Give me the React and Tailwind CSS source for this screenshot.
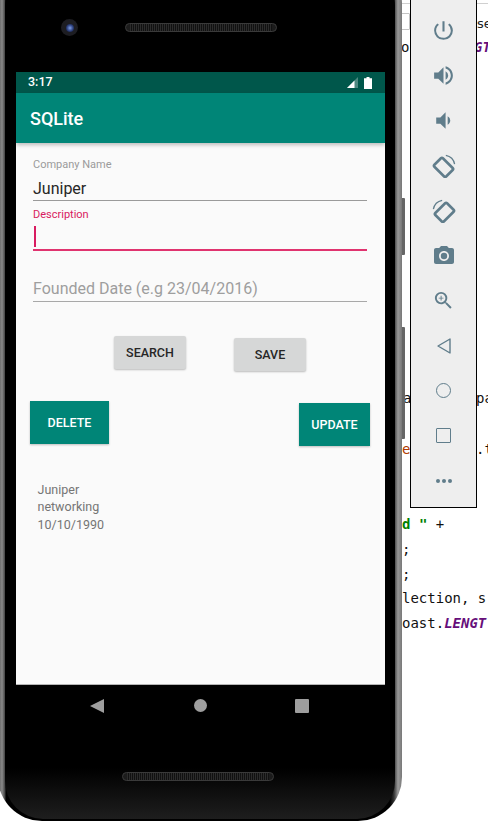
import React from "react";
import { MdPowerSettingsNew, MdVolumeUp, MdVolumeDown, MdCameraAlt, MdOutlineZoomIn } from "react-icons/md";

const roboto = "font-['Roboto',sans-serif]";
const slate = "#607d8b";

function RotateIcon({ flip }) {
  return (
    <svg width="24" height="24" viewBox="0 0 26 26" fill="none" stroke={slate} style={flip ? { transform: "scaleX(-1)" } : undefined}>
      <rect x="6" y="5.5" width="13" height="18" rx="1.5" strokeWidth="2.8" transform="rotate(-45 12.5 14.5)" />
      <path d="M15 1.5 A12 12 0 0 1 24.5 11" strokeWidth="1.4" />
    </svg>
  );
}

function SideButton({ children }) {
  return <div className="h-[45px] flex items-center justify-center">{children}</div>;
}

function Speaker({ className }) {
  return (
    <div className={`h-[9px] w-[152px] rounded-full border border-[#3a3a3a] bg-[#1c1c1c] ${className}`}>
      <div className="h-full mx-1 bg-[repeating-linear-gradient(90deg,#2c2c2c_0,#2c2c2c_1px,#111_1px,#111_2px)]" />
    </div>
  );
}

export default function App() {
  return (
    <div className={`relative w-[488px] h-[821px] overflow-hidden bg-white ${roboto}`}>
      {/* Editor behind the emulator */}
      <div className="absolute left-[396px] top-[3px] w-[92px] h-px bg-[#d0d0d0]" />
      <div className="absolute left-[400px] top-[13px] w-[10px] h-[17px] border border-[#c4c4c4] bg-white rounded-[1px]" />
      <div className="absolute left-[477px] top-[15px] text-[13px] leading-[18px] text-[#222] font-['DejaVu_Sans',sans-serif]">se</div>
      <div className="absolute left-0 top-0 w-full font-['DejaVu_Sans_Mono',monospace] text-[14px] leading-[24px] text-[#111]">
        <div className="absolute left-[401px] top-[35px] whitespace-pre">oa</div>
        <div className="absolute left-[474px] top-[35px] whitespace-pre font-bold italic text-[#660e7a]">GT</div>
        <div className="absolute left-[403px] top-[386px] whitespace-pre">al</div>
        <div className="absolute left-[476px] top-[386px] whitespace-pre">pa</div>
        <div className="absolute left-[402px] top-[437px] whitespace-pre text-[#b03a00]">e</div>
        <div className="absolute left-[476px] top-[437px] whitespace-pre">.t</div>
        <div className="absolute left-[402px] top-[512px] whitespace-pre"><span className="font-bold text-[#008000]">d</span> <span className="font-bold text-[#008000]">"</span> +</div>
        <div className="absolute left-[402px] top-[537px]">;</div>
        <div className="absolute left-[402px] top-[562px]">;</div>
        <div className="absolute left-[402px] top-[586px] whitespace-pre">lection, s</div>
        <div className="absolute left-[402px] top-[611px] whitespace-pre">oast.<span className="font-bold italic text-[#660e7a]">LENGT</span></div>
      </div>

      {/* Emulator side toolbar */}
      <div className="absolute left-[410px] top-[-2px] w-[67px] h-[510px] bg-[#eeeeee] border border-black pt-[9px] flex flex-col">
        <SideButton><MdPowerSettingsNew size={25} color={slate} /></SideButton>
        <SideButton><MdVolumeUp size={25} color={slate} /></SideButton>
        <SideButton><MdVolumeDown size={25} color={slate} /></SideButton>
        <SideButton><RotateIcon /></SideButton>
        <SideButton><RotateIcon flip /></SideButton>
        <SideButton><MdCameraAlt size={24} color={slate} /></SideButton>
        <SideButton><MdOutlineZoomIn size={23} color={slate} /></SideButton>
        <SideButton>
          <svg width="16" height="18" viewBox="0 0 16 18" fill="none" stroke={slate} strokeWidth="1.4"><path d="M14 2 L2 9 L14 16 Z" strokeLinejoin="round" /></svg>
        </SideButton>
        <SideButton><div className="w-[15px] h-[15px] rounded-full border-[1.5px] border-[#607d8b]" /></SideButton>
        <SideButton><div className="w-[15px] h-[15px] rounded-[1px] border-[1.5px] border-[#607d8b]" /></SideButton>
        <SideButton>
          <div className="flex gap-[2px]">
            <span className="w-[4px] h-[4px] rounded-full bg-[#607d8b]" />
            <span className="w-[4px] h-[4px] rounded-full bg-[#607d8b]" />
            <span className="w-[4px] h-[4px] rounded-full bg-[#607d8b]" />
          </div>
        </SideButton>
      </div>

      {/* Side keys on the phone edge */}
      <div className="absolute left-[401px] top-[198px] w-[4px] h-[57px] bg-[#666666] rounded-r-[1px]" />
      <div className="absolute left-[401px] top-[327px] w-[4px] h-[112px] bg-[#666666] rounded-r-[1px]" />

      {/* Phone body */}
      <div className="absolute left-[-2px] top-[-40px] w-[404px] h-[861px] rounded-[44px] bg-[linear-gradient(90deg,#555_0,#8a8a8a_1%,#444_1.7%,#000_2%,#000_97%,#333_98%,#9a9a9a_99%,#777_100%)] p-[7px_7px_2px_7px]">
        <div className="w-full h-full rounded-[38px] bg-[linear-gradient(180deg,#000_0,#000_94%,#1e1e1e_100%)] flex flex-col">
          <div className="h-[105px] relative flex items-end pb-[36px] shrink-0">
            <div className="ml-[56px] w-[17px] h-[17px] rounded-full bg-[#1d1d22] flex items-center justify-center">
              <div className="w-[8px] h-[8px] rounded-full bg-[radial-gradient(circle,#7f9fe8_0,#2c3f7c_55%,#0a0f22_100%)]" />
            </div>
            <Speaker className="ml-[47px] mb-[4px]" />
          </div>

          {/* Screen */}
          <div className="ml-[11px] w-[369px] h-[613px] shrink-0 flex flex-col bg-[#fafafa] border-b border-[#b5b5b5]">
            <div className="h-[21px] bg-[#00574b] flex items-center pl-[12px] pr-[13px] text-white text-[12.5px] font-medium">
              <span>3:17</span>
              <div className="ml-auto flex items-center gap-[6px]">
                <svg width="11" height="11" viewBox="0 0 11 11"><path d="M11 0V11H0Z" fill="#ffffff" fillOpacity="0.3" /><path d="M7.5 3.5V11H0Z" fill="#ffffff" /></svg>
                <svg width="8" height="12" viewBox="0 0 8 12"><path d="M2.5 0H5.5V1.2H8V12H0V1.2H2.5Z" fill="#ffffff" /></svg>
              </div>
            </div>
            <div className="h-[50px] bg-[#008577] flex items-center pl-[14px] text-white text-[18px] font-medium shadow-[0_2px_4px_rgba(0,0,0,0.25)]">SQLite</div>

            <div className="pl-[17px] pr-[18px] pt-[15px]">
              <div className="text-[11px] leading-[14px] text-[#9b9b9b]">Company Name</div>
              <div className="text-[16px] leading-[22px] mt-[6px] text-[#262626] border-b border-[#9a9a9a] h-[23px]">Juniper</div>
              <div className="text-[11px] leading-[14px] text-[#d81b60] mt-[7px]">Description</div>
              <div className="h-[30px] border-b-2 border-[#e0336f] flex pt-[5px] mt-[-1px]">
                <div className="w-[2px] h-[21px] bg-[#d81b60] ml-px" />
              </div>
              <div className="text-[16px] leading-[22px] mt-[27px] text-[#9e9e9e] border-b border-[#a8a8a8] h-[24px]">Founded Date (e.g 23/04/2016)</div>
            </div>

            <div className="flex pl-[98px] gap-[48px] mt-[34px] text-[12.5px] font-medium text-[#262626]">
              <div className="w-[72px] h-[33px] pt-[2px] bg-[#d6d7d7] rounded-[2px] shadow-[0_1px_2px_rgba(0,0,0,0.25)] flex items-center justify-center">SEARCH</div>
              <div className="w-[72px] h-[33px] pt-[2px] mt-[2px] bg-[#d6d7d7] rounded-[2px] shadow-[0_1px_2px_rgba(0,0,0,0.25)] flex items-center justify-center">SAVE</div>
            </div>

            <div className="flex justify-between pl-[14px] pr-[15px] mt-[30px] text-[12.5px] font-medium text-white">
              <div className="w-[79px] h-[43px] pt-[2px] bg-[#008577] shadow-[0_1px_2px_rgba(0,0,0,0.25)] flex items-center justify-center">DELETE</div>
              <div className="w-[71px] h-[43px] pt-[2px] mt-[2px] bg-[#008577] shadow-[0_1px_2px_rgba(0,0,0,0.25)] flex items-center justify-center">UPDATE</div>
            </div>

            <div className="pl-[21.5px] mt-[35px] text-[12.5px] leading-[17.4px] text-[#757575]">
              <div>Juniper</div>
              <div>networking</div>
              <div>10/10/1990</div>
            </div>
          </div>

          {/* Navigation */}
          <div className="h-[40px] flex items-center shrink-0 pt-[1px] relative">
            <svg className="ml-[85px]" width="14" height="14" viewBox="0 0 14 14"><path d="M14 0V14L0 7Z" fill="#9e9e9e" /></svg>
            <div className="ml-[90px] w-[13px] h-[13px] rounded-full bg-[#9e9e9e]" />
            <div className="ml-[88px] w-[14px] h-[14px] rounded-[1px] bg-[#9e9e9e]" />
          </div>
          <div className="mt-[47px] ml-[117px]"><Speaker /></div>
        </div>
      </div>
    </div>
  );
}
